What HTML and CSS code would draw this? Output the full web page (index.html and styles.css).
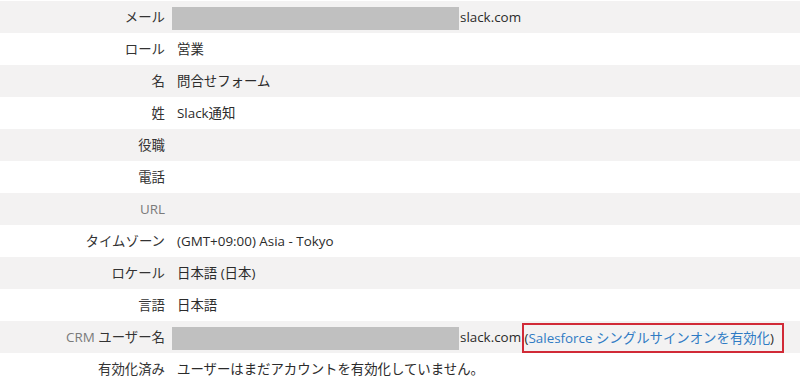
FILE: index.html
```html
<!DOCTYPE html>
<html lang="ja">
<head>
  <meta charset="UTF-8">
  <title>ユーザーの詳細</title>
<link rel="stylesheet" href="styles.css">
</head>
<body>
  <div class="details">
    <div class="row">
      <div class="label">メール</div>
      <div class="value"><span class="mask"></span>slack.com</div>
    </div>
    <div class="row">
      <div class="label">ロール</div>
      <div class="value">営業</div>
    </div>
    <div class="row">
      <div class="label">名</div>
      <div class="value">問合せフォーム</div>
    </div>
    <div class="row">
      <div class="label">姓</div>
      <div class="value">Slack通知</div>
    </div>
    <div class="row">
      <div class="label">役職</div>
      <div class="value"></div>
    </div>
    <div class="row">
      <div class="label">電話</div>
      <div class="value"></div>
    </div>
    <div class="row">
      <div class="label"><span class="latin">URL</span></div>
      <div class="value"></div>
    </div>
    <div class="row">
      <div class="label">タイムゾーン</div>
      <div class="value">(GMT+09:00) Asia - Tokyo</div>
    </div>
    <div class="row">
      <div class="label">ロケール</div>
      <div class="value">日本語 (日本)</div>
    </div>
    <div class="row">
      <div class="label">言語</div>
      <div class="value">日本語</div>
    </div>
    <div class="row">
      <div class="label"><span class="latin">CRM</span> ユーザー名</div>
      <div class="value"><span class="mask"></span>slack.com <span class="highlight">(<a href="#" class="link">Salesforce シングルサインオンを有効化</a>)</span></div>
    </div>
    <div class="row">
      <div class="label">有効化済み</div>
      <div class="value">ユーザーはまだアカウントを有効化していません。</div>
    </div>
  </div>
</body>
</html>
```

FILE: styles.css
```css
body {
  margin: 0;
  background: #fff;
  font-family: "Open Sans", "Noto Sans CJK JP", sans-serif;
  font-size: 13.4px;
  color: #2b2b2b;
}
.details {
  padding-top: 1px;
}
.row {
  display: grid;
  grid-template-columns: 165px 1fr;
  column-gap: 12px;
  height: 32px;
  line-height: 32px;
  align-items: center;
}
.row:nth-child(odd) {
  background: #f3f2f2;
}
.label {
  text-align: right;
  white-space: nowrap;
  color: #333;
}
.latin {
  color: #7a7a7a;
}
.value {
  white-space: nowrap;
}
.mask {
  display: inline-block;
  width: 287px;
  height: 23px;
  margin-left: -5px;
  margin-right: 1px;
  vertical-align: middle;
  background: #c0c0c0;
}
.highlight {
  display: inline-block;
  line-height: 26px;
  padding: 0 8px 0 1px;
  border: 2px solid #d12a37;
  margin-left: -3px;
  vertical-align: middle;
}
.link {
  color: #2f7bc4;
  text-decoration: none;
}
```
